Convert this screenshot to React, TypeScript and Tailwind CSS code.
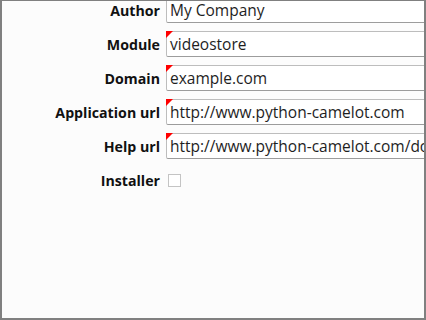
const fields = [
  { label: "Author", value: "My Company", required: false },
  { label: "Module", value: "videostore", required: true },
  { label: "Domain", value: "example.com", required: true },
  { label: "Application url", value: "http://www.python-camelot.com", required: true },
  { label: "Help url", value: "http://www.python-camelot.com/docs", required: true },
]

const TextField = ({ value, required }: { value: string; required: boolean }) => {
  return (
    <div className="relative h-[26px] w-[300px] rounded-[2px] border border-[#bdbdbd] border-b-[#9c9c9c] bg-white">
      <div className="flex h-full items-center pl-[3px] pt-[1px] text-[15.5px] text-[#1e1e1e] whitespace-nowrap overflow-hidden">
        {value}
      </div>
      {required && (
        <div className="absolute -left-px -top-px h-0 w-0 border-l-[7px] border-b-[7px] border-l-[#ff0000] border-b-transparent border-t-0" />
      )}
    </div>
  )
}

export default function App() {
  return (
    <div
      className="h-[320px] w-[426px] overflow-hidden border-x-2 border-b-2 border-t border-[#808080] bg-[#fcfcfc]"
      style={{ fontFamily: '"Open Sans", "DejaVu Sans", sans-serif' }}
    >
      <div className="-mt-[4px] grid grid-cols-[158px_1fr] auto-rows-[26px] gap-x-[6px] gap-y-[8px]">
        {fields.map((f) => (
          <div key={f.label} className="contents">
            <div className="flex items-center justify-end pt-[2px] text-[14.2px] font-bold text-[#111]">
              {f.label}
            </div>
            <TextField value={f.value} required={f.required} />
          </div>
        ))}
        <div className="flex items-center justify-end pt-[2px] text-[14.2px] font-bold text-[#111]">
          Installer
        </div>
        <div className="flex items-center pl-[2px]">
          <div className="h-[13px] w-[13px] border border-[#c4c4c4] bg-white" />
        </div>
      </div>
    </div>
  )
}
